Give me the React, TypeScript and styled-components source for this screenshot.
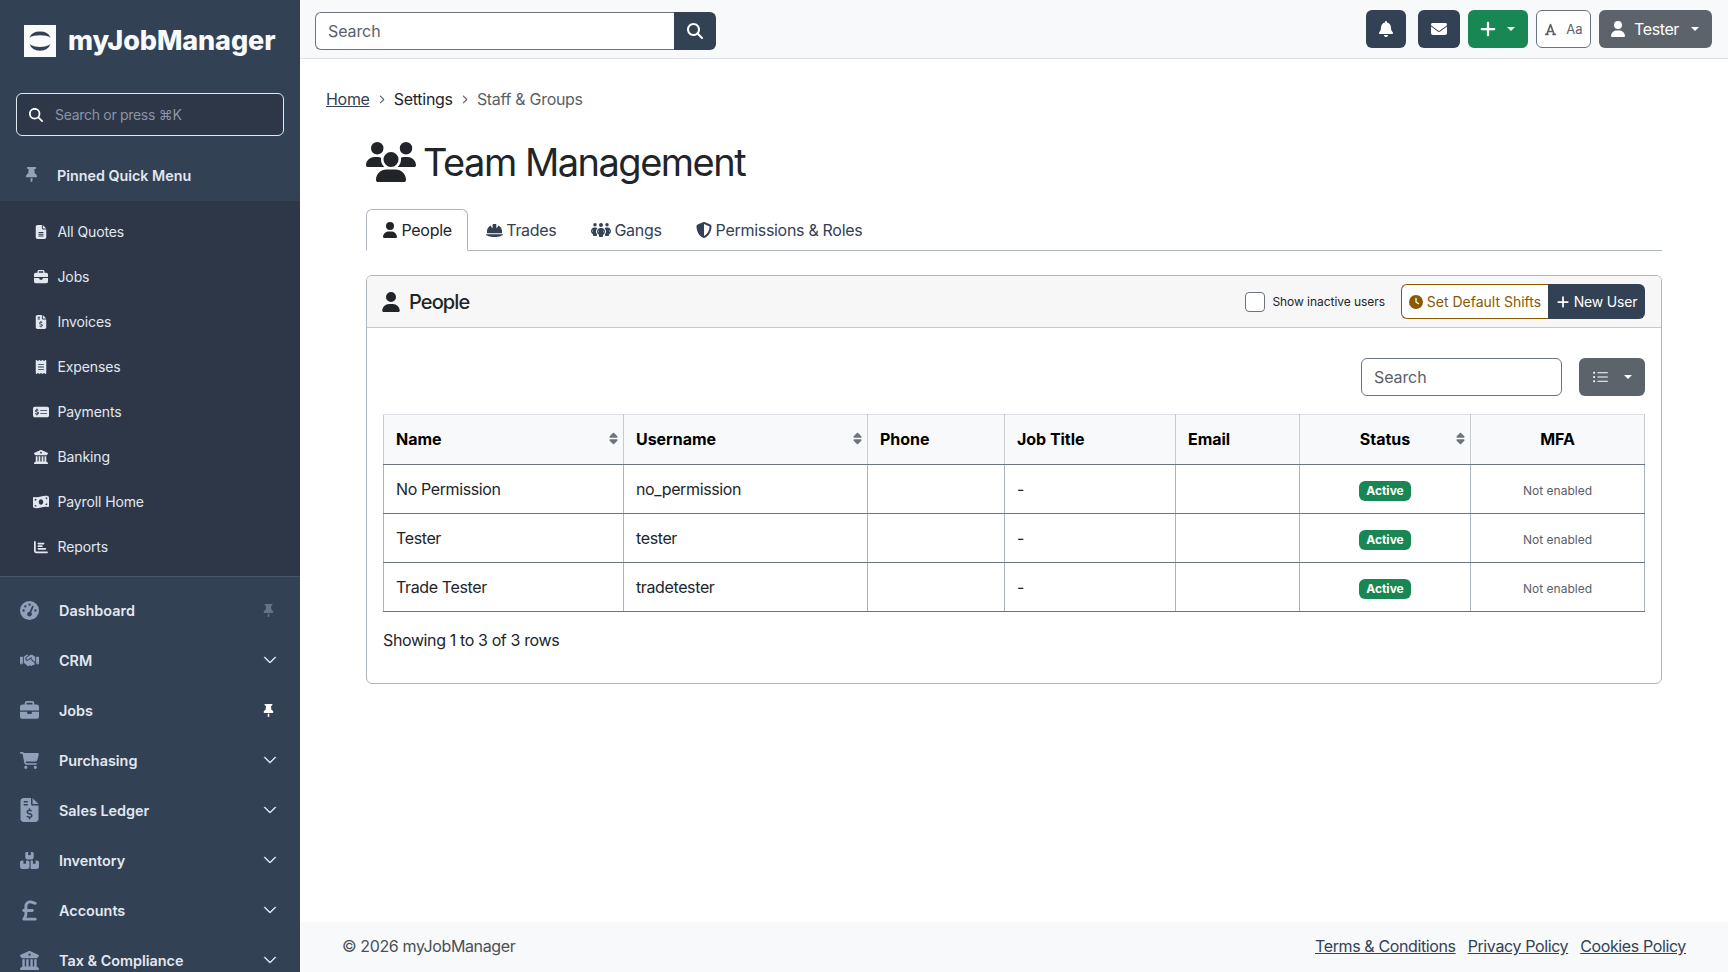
import React from "react";
import styled, { createGlobalStyle } from "styled-components";
import {
  FaBell, FaBoxesStacked, FaBriefcase, FaBuildingColumns, FaCartShopping, FaChartBar, FaChevronRight, FaClock,
  FaEnvelope, FaFileInvoiceDollar, FaFileLines, FaFont, FaGaugeHigh, FaHandshake, FaHelmetSafety,
  FaMagnifyingGlass, FaMoneyBillWave, FaMoneyCheckDollar, FaPeopleGroup, FaPlus, FaReceipt,
  FaShieldHalved, FaSort, FaSterlingSign, FaThumbtack, FaUser, FaUsers,
} from "react-icons/fa6";
import { BsChevronDown, BsListUl } from "react-icons/bs";

const Global = createGlobalStyle`
  * { box-sizing: border-box; }
  html, body { margin: 0; height: 100%; }
  body { font-family: Inter, "Liberation Sans", sans-serif; font-size: 16px; letter-spacing: -0.38px; color: #212529; background: #fff; overflow: hidden; }
`;

const Shell = styled.div`display: flex; width: 1728px; height: 972px; overflow: hidden;`;
const Sidebar = styled.aside`width: 300px; flex: none; background: #334155; display: flex; flex-direction: column; overflow: hidden; letter-spacing: 0;`;
const Brand = styled.div`display: flex; align-items: center; gap: 12px; height: 81px; padding: 0 0 0 24px; flex: none; svg { flex: none; }`;
const BrandName = styled.span`font-family: Inter, sans-serif; font-weight: 800; font-size: 27px; letter-spacing: -0.1px; color: #f8fafc; line-height: 1; margin-top: -1px; white-space: nowrap;`;
const SideSearch = styled.div`
  flex: none; margin: 12px 16px 0; height: 43px; border: 1px solid #e2e8f0; border-radius: 6px; background: #2d3748;
  display: flex; align-items: center; gap: 12px; padding: 0 12px; color: #fff; font-size: 14px; letter-spacing: -0.3px;
  span { color: #8b95a5; }
`;
const PinHead = styled.div`
  flex: none; height: 65px; display: flex; align-items: center; padding: 14px 0 0 24px; gap: 18px;
  font-size: 14.3px; font-weight: 600; color: #e2e8f0; svg { color: #94a3b8; margin-top: -3px; }
`;
const PinList = styled.div`flex: none; background: #2d3748; height: 376px; padding: 8px 0; border-bottom: 1px solid #475569;`;
const PinItem = styled.div`
  height: 45px; display: flex; align-items: center; font-size: 14px; letter-spacing: -0.12px; color: #e2e8f0; padding-left: 32px;
  i { width: 18px; margin-right: 7.5px; display: flex; justify-content: center; }
`;
const MainNav = styled.div`padding-top: 8px; flex: none;`;
const NavItem = styled.div`
  height: 50px; display: flex; align-items: center; padding: 0 23px 0 20px; font-size: 14.4px; font-weight: 600; color: #e2e8f0;
  i { width: 19px; margin-right: 20px; display: flex; justify-content: center; color: #8fa0b8; }
  b { flex: 1; font-weight: 600; }
`;
const NavPin = styled.span<{ $on?: boolean }>`display: flex; margin-right: 2px; color: ${(p) => (p.$on ? "#fff" : "#64748b")};`;

const Main = styled.main`flex: 1; display: flex; flex-direction: column; min-width: 0;`;
const Topbar = styled.header`
  flex: none; height: 59px; background: #f8f9fa; border-bottom: 1px solid #dee2e6; display: flex; justify-content: space-between; align-items: flex-start; padding: 0 16px 0 15px;
`;
const SearchForm = styled.div`display: flex; margin-top: 12px; height: 38px; width: 401px;`;
const TopInput = styled.div`
  flex: 1; background: #fff; border: 1px solid #6c757d; border-right: 0; border-radius: 6px 0 0 6px; display: flex; align-items: center; padding-left: 12px; color: #596069; letter-spacing: -0.1px;
`;
const TopSearchBtn = styled.div`width: 42px; background: #334155; color: #fff; border-radius: 0 6px 6px 0; display: flex; align-items: center; justify-content: center;`;
const TopActions = styled.div`display: flex; margin-top: 10px; gap: 8px;`;
const TopBtn = styled.div<{ $bg?: string; $w: number; $ml?: number; $gap?: number; $pr?: number }>`
  height: 38px; width: ${(p) => p.$w}px; margin-left: ${(p) => p.$ml ?? 0}px; padding-right: ${(p) => p.$pr ?? 0}px; background: ${(p) => p.$bg ?? "#334155"}; color: #fff; border-radius: 6px;
  display: flex; align-items: center; justify-content: center; gap: ${(p) => p.$gap ?? 8}px;
`;
const FontBtn = styled.div`
  height: 38px; width: 55px; background: #fff; border: 1px solid #6c757d; border-radius: 6px; color: #5c636a; display: flex; align-items: center; justify-content: center; gap: 9px; font-size: 13px; letter-spacing: 0;
`;
const Caret = styled.span<{ $ml?: number }>`width: 0; height: 0; border-top: 4.8px solid currentColor; border-left: 4.8px solid transparent; border-right: 4.8px solid transparent; margin-left: ${(p) => p.$ml ?? 0}px;`;

const Content = styled.div`flex: 1; padding: 0 66px 0 26px; min-height: 0;`;
const Crumbs = styled.nav`height: 24px; margin-top: 28px; display: flex; align-items: center; gap: 7.6px; font-size: 16px; letter-spacing: -0.3px; color: #212529;
  a { color: #334155; text-decoration: underline; } em { font-style: normal; color: #596069; } svg { color: #5c636a; }`;
const Inner = styled.div`margin-left: 40px;`;
const Title = styled.h1`margin: 27px 0 0; height: 48px; display: flex; align-items: center; gap: 7px; font-size: 38px; font-weight: 400; line-height: 48px; color: #212529; letter-spacing: -1.5px;`;
const Tabs = styled.div`margin-top: 23px; height: 42px; display: flex; border-bottom: 1px solid #adb5bd;`;
const Tab = styled.div<{ $active?: boolean }>`
  height: 42px; display: flex; align-items: center; gap: 3.5px; padding: ${(p) => (p.$active ? "0 15.5px 0 15px" : "0 16px 0 16.5px")}; letter-spacing: -0.3px; border: 1px solid ${(p) => (p.$active ? "#adb5bd" : "transparent")};
  border-bottom-color: ${(p) => (p.$active ? "#fff" : "transparent")}; border-radius: 6px 6px 0 0; color: ${(p) => (p.$active ? "#212529" : "#334155")};
`;
const Card = styled.section`margin-top: 24px; border: 1px solid #adb5bd; border-radius: 6px; height: 409px; overflow: hidden;`;
const CardHead = styled.div`height: 52px; background: #f7f7f7; border-bottom: 1px solid #c4c9ce; display: flex; align-items: center; padding: 0 16px; `;
const CardTitle = styled.h2`margin: 0 0 0 -2px; flex: 1; display: flex; align-items: center; gap: 8px; font-size: 20px; font-weight: 500; color: #212529; letter-spacing: -0.9px;`;
const Check = styled.span`width: 20px; height: 20px; border: 1px solid #6c757d; border-radius: 4px; background: #fff; margin-right: 7px;`;
const CheckLabel = styled.span`font-size: 12px; color: #212529; margin-right: 16px; letter-spacing: -0.05px;`;
const ShiftBtn = styled.div`height: 35px; width: 147px; border: 1px solid #8a5a00; border-right: 0; background: #fff; color: #8a5a00; border-radius: 6px 0 0 6px; font-size: 14px; letter-spacing: 0; display: flex; align-items: center; justify-content: center; gap: 4px;`;
const NewBtn = styled.div`height: 35px; width: 97px; background: #334155; color: #fff; border-radius: 0 6px 6px 0; font-size: 14px; letter-spacing: -0.2px; display: flex; align-items: center; justify-content: center; gap: 4px;`;
const CardBody = styled.div`padding: 30px 16px 0;`;
const Tools = styled.div`display: flex; justify-content: flex-end; gap: 17px; height: 38px;`;
const TableSearch = styled.div`width: 201px; border: 1px solid #6c757d; border-radius: 6px; display: flex; align-items: center; padding-left: 12px; color: #596069; letter-spacing: -0.1px;`;
const ColumnsBtn = styled.div`width: 66px; background: #5c636a; border-radius: 6px; color: #fff; display: flex; align-items: center; justify-content: center; gap: 15px;`;
const Table = styled.table`margin-top: 18px; width: 1261px; table-layout: fixed; border-collapse: collapse;`;
const Th = styled.th<{ $center?: boolean }>`
  height: 50px; background: #f8f9fa; border: 1px solid #c6cbd0; border-bottom: 1px solid #6c757d; border-top-color: #dee2e6; padding: 0 12px 2px; font-weight: 700; font-size: 16px; letter-spacing: -0.03px; color: #000;
  text-align: ${(p) => (p.$center ? "center" : "left")}; position: relative;
`;
const SortMark = styled.span`position: absolute; right: 3px; top: 17px; color: #6c757d; display: flex;`;
const Td = styled.td<{ $center?: boolean; $small?: boolean }>`
  height: 49px; border-top: 1px solid #6c757d; border-bottom: 1px solid #6c757d; border-left: 1px solid #adb5bd; border-right: 1px solid #adb5bd; padding: ${(p) => (p.$small ? "2px" : "0")} 12px 0;
  text-align: ${(p) => (p.$center ? "center" : "left")}; font-size: ${(p) => (p.$small ? "12px" : "16px")}; letter-spacing: ${(p) => (p.$small ? "0" : "-0.38px")}; color: ${(p) => (p.$small ? "#596069" : "#212529")};
`;
const Badge = styled.span`display: inline-block; width: 52px; height: 20px; line-height: 20px; text-align: center; border-radius: 6px; background: #198754; color: #fff; font-size: 12px; font-weight: 700; letter-spacing: 0; vertical-align: -2px;`;
const Summary = styled.div`margin-top: 16px; height: 24px; line-height: 24px; color: #212529;`;
const Footer = styled.footer`flex: none; height: 50px; background: #f8f9fa; display: flex; justify-content: space-between; align-items: center; padding: 0 42px 2px; color: #495057;
  div { display: flex; gap: 12px; } a { color: #334155; text-decoration: underline; }`;

const Logo = () => (
  <svg width="32" height="32" viewBox="0 0 32 32" aria-hidden="true">
    <rect width="32" height="32" fill="#f8fafc" />
    <path d="M5.500 12.500A11 8.500 0 0 1 26.500 12.500C22 9.400 10 9.400 5.500 12.500Z" fill="#334155" />
    <path d="M5.500 19C10 23 22 23 26.500 19A11 9.500 0 0 1 5.500 19Z" fill="#334155" />
  </svg>
);

const pinned: [React.ReactNode, string][] = [
  [<FaFileLines size={14} />, "All Quotes"],
  [<FaBriefcase size={14} />, "Jobs"],
  [<FaFileInvoiceDollar size={14} />, "Invoices"],
  [<FaReceipt size={14} />, "Expenses"],
  [<FaMoneyCheckDollar size={16} />, "Payments"],
  [<FaBuildingColumns size={14} />, "Banking"],
  [<FaMoneyBillWave size={16} />, "Payroll Home"],
  [<FaChartBar size={14} />, "Reports"],
];

const nav: [React.ReactNode, string, "pin" | "pinOn" | "chev"][] = [
  [<FaGaugeHigh size={19} />, "Dashboard", "pin"],
  [<FaHandshake size={19} />, "CRM", "chev"],
  [<FaBriefcase size={19} />, "Jobs", "pinOn"],
  [<FaCartShopping size={19} />, "Purchasing", "chev"],
  [<FaFileInvoiceDollar size={24} />, "Sales Ledger", "chev"],
  [<FaBoxesStacked size={19} />, "Inventory", "chev"],
  [<FaSterlingSign size={23} />, "Accounts", "chev"],
  [<FaBuildingColumns size={19} />, "Tax & Compliance", "chev"],
];

const rows = [
  ["No Permission", "no_permission"],
  ["Tester", "tester"],
  ["Trade Tester", "tradetester"],
];

export default function App() {
  return (
    <Shell>
      <Global />
      <Sidebar>
        <Brand>
          <Logo />
          <BrandName>myJobManager</BrandName>
        </Brand>
        <SideSearch>
          <FaMagnifyingGlass size={14} />
          <span>Search or press ⌘K</span>
        </SideSearch>
        <PinHead>
          <FaThumbtack size={15} />
          Pinned Quick Menu
        </PinHead>
        <PinList>
          {pinned.map(([icon, label]) => (
            <PinItem key={label}>
              <i>{icon}</i>
              {label}
            </PinItem>
          ))}
        </PinList>
        <MainNav>
          {nav.map(([icon, label, kind]) => (
            <NavItem key={label}>
              <i>{icon}</i>
              <b>{label}</b>
              {kind === "chev" ? (
                <BsChevronDown size={14} color="#e2e8f0" stroke="#e2e8f0" strokeWidth={0.8} />
              ) : (
                <NavPin $on={kind === "pinOn"}>
                  <FaThumbtack size={13} />
                </NavPin>
              )}
            </NavItem>
          ))}
        </MainNav>
      </Sidebar>
      <Main>
        <Topbar>
          <SearchForm>
            <TopInput>Search</TopInput>
            <TopSearchBtn>
              <FaMagnifyingGlass size={16} />
            </TopSearchBtn>
          </SearchForm>
          <TopActions>
            <TopBtn $w={40}><FaBell size={16} /></TopBtn>
            <TopBtn $w={42} $ml={4}><FaEnvelope size={16} /></TopBtn>
            <TopBtn $w={60} $bg="#198754" $gap={10} $pr={2}><FaPlus size={18} /><Caret /></TopBtn>
            <FontBtn><FaFont size={13} />Aa</FontBtn>
            <TopBtn $w={113} $bg="#5c636a" $pr={2}><FaUser size={16} />Tester<Caret $ml={4} /></TopBtn>
          </TopActions>
        </Topbar>
        <Content>
          <Crumbs>
            <a>Home</a>
            <FaChevronRight size={9} />
            <span>Settings</span>
            <FaChevronRight size={9} />
            <em>Staff &amp; Groups</em>
          </Crumbs>
          <Inner>
            <Title>
              <FaUsers size={50} />
              Team Management
            </Title>
            <Tabs>
              <Tab $active><FaUser size={16} />People</Tab>
              <Tab><FaHelmetSafety size={17} />Trades</Tab>
              <Tab><FaPeopleGroup size={20} />Gangs</Tab>
              <Tab><FaShieldHalved size={16} />Permissions &amp; Roles</Tab>
            </Tabs>
            <Card>
              <CardHead>
                <CardTitle><FaUser size={20} />People</CardTitle>
                <Check />
                <CheckLabel>Show inactive users</CheckLabel>
                <ShiftBtn><FaClock size={14} />Set Default Shifts</ShiftBtn>
                <NewBtn><FaPlus size={14} />New User</NewBtn>
              </CardHead>
              <CardBody>
                <Tools>
                  <TableSearch>Search</TableSearch>
                  <ColumnsBtn><BsListUl size={17} /><Caret /></ColumnsBtn>
                </Tools>
                <Table>
                  <colgroup>
                    <col style={{ width: 240 }} />
                    <col style={{ width: 244 }} />
                    <col style={{ width: 137 }} />
                    <col style={{ width: 171 }} />
                    <col style={{ width: 124 }} />
                    <col style={{ width: 171 }} />
                    <col style={{ width: 174 }} />
                  </colgroup>
                  <thead>
                    <tr>
                      <Th>Name<SortMark><FaSort size={13} /></SortMark></Th>
                      <Th>Username<SortMark><FaSort size={13} /></SortMark></Th>
                      <Th>Phone</Th>
                      <Th>Job Title</Th>
                      <Th>Email</Th>
                      <Th $center>Status<SortMark><FaSort size={13} /></SortMark></Th>
                      <Th $center>MFA</Th>
                    </tr>
                  </thead>
                  <tbody>
                    {rows.map(([name, user]) => (
                      <tr key={user}>
                        <Td>{name}</Td>
                        <Td>{user}</Td>
                        <Td />
                        <Td>-</Td>
                        <Td />
                        <Td $center><Badge>Active</Badge></Td>
                        <Td $center $small>Not enabled</Td>
                      </tr>
                    ))}
                  </tbody>
                </Table>
                <Summary>Showing 1 to 3 of 3 rows</Summary>
              </CardBody>
            </Card>
          </Inner>
        </Content>
        <Footer>
          <span>© 2026 myJobManager</span>
          <div>
            <a>Terms &amp; Conditions</a>
            <a>Privacy Policy</a>
            <a>Cookies Policy</a>
          </div>
        </Footer>
      </Main>
    </Shell>
  );
}
